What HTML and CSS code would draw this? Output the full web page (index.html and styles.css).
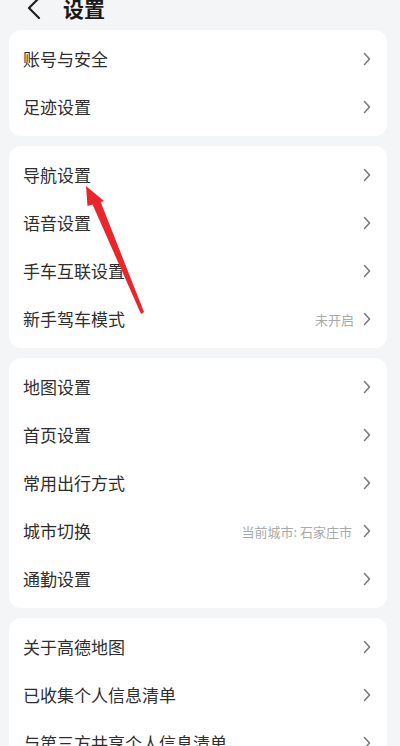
FILE: index.html
```html
<!DOCTYPE html>
<html lang="zh-CN">
<head>
<meta charset="utf-8">
<link rel="stylesheet" href="styles.css">
</head>
<body>
<div class="page">
  <div class="header">
    <svg class="back" width="14" height="22" viewBox="0 0 14 22"><polyline points="12,1 2,11 12,21" fill="none" stroke="#222" stroke-width="2.2" stroke-linecap="round" stroke-linejoin="round"/></svg>
    <span class="title">设置</span>
  </div>

  <div class="card">
    <div class="row"><span class="label">账号与安全</span><span class="right"><svg class="chev" viewBox="0 0 8 14"><polyline points="1.5,1.5 6.5,7 1.5,12.5"/></svg></span></div>
    <div class="row"><span class="label">足迹设置</span><span class="right"><svg class="chev" viewBox="0 0 8 14"><polyline points="1.5,1.5 6.5,7 1.5,12.5"/></svg></span></div>
  </div>

  <div class="card">
    <div class="row"><span class="label">导航设置</span><span class="right"><svg class="chev" viewBox="0 0 8 14"><polyline points="1.5,1.5 6.5,7 1.5,12.5"/></svg></span></div>
    <div class="row"><span class="label">语音设置</span><span class="right"><svg class="chev" viewBox="0 0 8 14"><polyline points="1.5,1.5 6.5,7 1.5,12.5"/></svg></span></div>
    <div class="row"><span class="label">手车互联设置</span><span class="right"><svg class="chev" viewBox="0 0 8 14"><polyline points="1.5,1.5 6.5,7 1.5,12.5"/></svg></span></div>
    <div class="row"><span class="label">新手驾车模式</span><span class="right"><span class="value">未开启</span><svg class="chev" viewBox="0 0 8 14"><polyline points="1.5,1.5 6.5,7 1.5,12.5"/></svg></span></div>
  </div>

  <div class="card">
    <div class="row"><span class="label">地图设置</span><span class="right"><svg class="chev" viewBox="0 0 8 14"><polyline points="1.5,1.5 6.5,7 1.5,12.5"/></svg></span></div>
    <div class="row"><span class="label">首页设置</span><span class="right"><svg class="chev" viewBox="0 0 8 14"><polyline points="1.5,1.5 6.5,7 1.5,12.5"/></svg></span></div>
    <div class="row"><span class="label">常用出行方式</span><span class="right"><svg class="chev" viewBox="0 0 8 14"><polyline points="1.5,1.5 6.5,7 1.5,12.5"/></svg></span></div>
    <div class="row"><span class="label">城市切换</span><span class="right"><span class="value city">当前城市: 石家庄市</span><svg class="chev" viewBox="0 0 8 14"><polyline points="1.5,1.5 6.5,7 1.5,12.5"/></svg></span></div>
    <div class="row"><span class="label">通勤设置</span><span class="right"><svg class="chev" viewBox="0 0 8 14"><polyline points="1.5,1.5 6.5,7 1.5,12.5"/></svg></span></div>
  </div>

  <div class="card">
    <div class="row"><span class="label">关于高德地图</span><span class="right"><svg class="chev" viewBox="0 0 8 14"><polyline points="1.5,1.5 6.5,7 1.5,12.5"/></svg></span></div>
    <div class="row"><span class="label">已收集个人信息清单</span><span class="right"><svg class="chev" viewBox="0 0 8 14"><polyline points="1.5,1.5 6.5,7 1.5,12.5"/></svg></span></div>
    <div class="row"><span class="label">与第三方共享个人信息清单</span><span class="right"><svg class="chev" viewBox="0 0 8 14"><polyline points="1.5,1.5 6.5,7 1.5,12.5"/></svg></span></div>
  </div>

  <svg class="arrow" width="400" height="746" viewBox="0 0 400 746">
    <polygon points="86,186 87.5,206 104,201" fill="#e8262b"/>
    <polygon points="91,201 99.5,199 144,312 141,314" fill="#e8262b"/>
  </svg>
</div>
</body>
</html>
```
FILE: styles.css
```css
html, body {
  margin: 0;
  padding: 0;
  background: #f4f5f7;
}
.page {
  position: relative;
  width: 400px;
  height: 746px;
  overflow: hidden;
  font-family: "Noto Sans CJK SC", "Noto Sans", sans-serif;
  color: #333;
}
.header {
  display: flex;
  align-items: center;
  height: 22px;
  margin-top: -3px;
  margin-bottom: 11px;
  padding-left: 27px;
}
.back {
  display: block;
}
.title {
  margin-left: 22px;
  font-size: 21px;
  font-weight: 700;
  color: #1a1a1a;
  line-height: 22px;
}
.card {
  margin: 0 13px 10px 9px;
  background: #fff;
  border-radius: 12px;
  padding: 5px 16px 5px 14px;
}
.row {
  display: flex;
  align-items: center;
  justify-content: space-between;
  height: 48px;
}
.label {
  font-size: 17px;
  line-height: 20px;
  color: #2e2e2e;
  white-space: nowrap;
}
.right {
  display: flex;
  align-items: center;
}
.value {
  font-size: 13px;
  color: #aaa;
  margin-right: 9px;
  white-space: nowrap;
}
.city {
  font-size: 13px;
  margin-right: 11px;
}
.chev {
  width: 8px;
  height: 14px;
  fill: none;
  stroke: #777;
  stroke-width: 1.5;
  stroke-linecap: round;
  stroke-linejoin: round;
}
.arrow {
  position: absolute;
  left: 0;
  top: 0;
  pointer-events: none;
}
```
